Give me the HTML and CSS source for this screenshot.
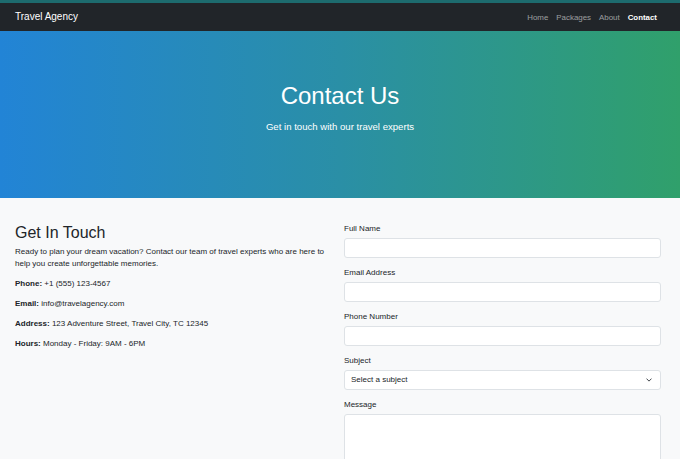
FILE: index.html
```html
<!DOCTYPE html>
<html lang="en">
<head>
<meta charset="utf-8">
<title>Contact - Travel Agency</title>
<link rel="stylesheet" href="styles.css">
</head>
<body>
<div class="topstrip"></div>
<nav class="navbar">
  <a class="brand" href="#">Travel Agency</a>
  <ul class="nav">
    <li><a href="#">Home</a></li>
    <li><a href="#">Packages</a></li>
    <li><a href="#">About</a></li>
    <li><a class="active" href="#">Contact</a></li>
  </ul>
</nav>
<header class="hero">
  <h1>Contact Us</h1>
  <p>Get in touch with our travel experts</p>
</header>
<main class="main">
  <section class="info">
    <h2>Get In Touch</h2>
    <p>Ready to plan your dream vacation? Contact our team of travel experts who are here to help you create unforgettable memories.</p>
    <p><strong>Phone:</strong> +1 (555) 123-4567</p>
    <p><strong>Email:</strong> info@travelagency.com</p>
    <p><strong>Address:</strong> 123 Adventure Street, Travel City, TC 12345</p>
    <p><strong>Hours:</strong> Monday - Friday: 9AM - 6PM</p>
  </section>
  <form class="form">
    <div class="group">
      <label>Full Name</label>
      <div class="control"></div>
    </div>
    <div class="group">
      <label>Email Address</label>
      <div class="control"></div>
    </div>
    <div class="group">
      <label>Phone Number</label>
      <div class="control"></div>
    </div>
    <div class="group">
      <label>Subject</label>
      <div class="control select">
        <span>Select a subject</span>
        <svg width="6" height="6" viewBox="0 0 16 16"><path d="M2 5l6 6 6-6" fill="none" stroke="#343a40" stroke-width="2.5" stroke-linecap="round" stroke-linejoin="round"/></svg>
      </div>
    </div>
    <div class="group">
      <label>Message</label>
      <div class="control textarea"></div>
    </div>
  </form>
</main>
</body>
</html>
```
FILE: styles.css
```css
* { box-sizing: border-box; }
html, body { margin: 0; padding: 0; }
body {
  font-family: "Liberation Sans", Arial, sans-serif;
  color: #212529;
  background: #f8f9fa;
  font-size: 8px;
  line-height: 1.5;
}
.topstrip { height: 3px; background: #1d6b6e; }
.navbar {
  height: 28px;
  background: #212529;
  display: flex;
  align-items: center;
  justify-content: space-between;
  padding: 0 19px 0 15px;
}
.brand {
  color: #fff;
  font-size: 10px;
  text-decoration: none;
  line-height: 1;
}
.nav {
  list-style: none;
  margin: 0;
  padding: 0;
  display: flex;
}
.nav a {
  display: block;
  padding: 1px 4px 0;
  color: rgba(255,255,255,0.55);
  text-decoration: none;
  font-size: 7.9px;
}
.nav a.active { color: #fff; font-weight: 700; padding-right: 4px; }
.hero {
  height: 167px;
  background: linear-gradient(90deg, #2284d6 0%, #2a8fa6 50%, #30a06b 100%);
  color: #fff;
  text-align: center;
  padding-top: 51px;
}
.hero h1 {
  margin: 0 0 9px;
  font-size: 24px;
  font-weight: 400;
  line-height: 1.2;
}
.hero p {
  margin: 0;
  font-size: 9.6px;
  line-height: 1.5;
}
.main {
  display: grid;
  grid-template-columns: 1fr 1fr;
  column-gap: 12px;
  padding: 25px 19px 24px 15px;
}
.info h2 {
  margin: 0 0 4px;
  font-size: 16px;
  font-weight: 400;
  line-height: 1.2;
}
.info p { margin: 0 0 8px; }
.info strong { font-weight: 700; }
.form { margin: 0; }
.group { margin-bottom: 9px; }
.group label { display: block; margin-bottom: 3px; line-height: 12px; }
.control {
  height: 20px;
  background: #fff;
  border: 1px solid #dee2e6;
  border-radius: 3px;
}
.select {
  display: flex;
  align-items: center;
  justify-content: space-between;
  padding: 0 8px 0 6px;
}
.textarea { height: 60px; }
```
